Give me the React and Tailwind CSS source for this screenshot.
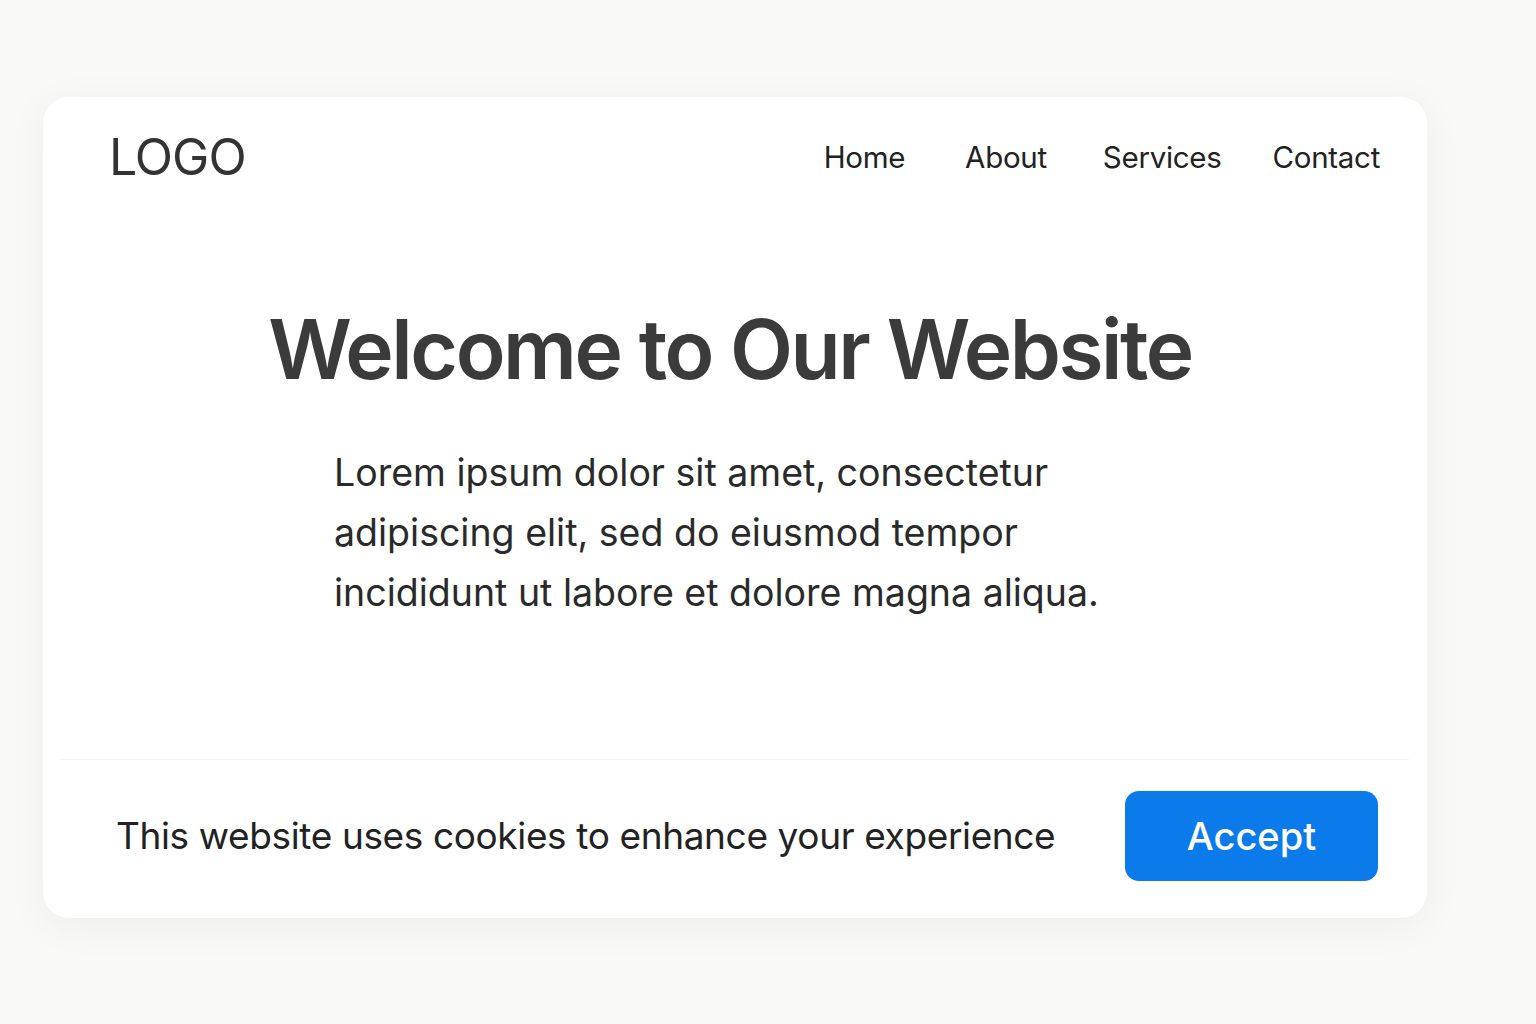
export default function App() {
  return (
    <div className="min-h-screen w-full bg-[#f9f9f7] pt-[97px] pl-[43px]" style={{ fontFamily: 'Inter, "Noto Sans", sans-serif' }}>
      <div className="w-[1384px] h-[821px] bg-white rounded-[26px] shadow-[0_8px_40px_rgba(0,0,0,0.05)] flex flex-col">
        {/* Header */}
        <header className="h-[120px] flex items-center justify-between pl-[66px] pr-[47px]">
          <div className="text-[50px] leading-none text-[#333] tracking-[-0.02em]">LOGO</div>
          <nav className="flex items-center text-[29.5px] text-[#222] tracking-[-0.01em]">
            <a className="mr-[60px]">Home</a>
            <a className="mr-[56px]">About</a>
            <a className="mr-[51px]">Services</a>
            <a>Contact</a>
          </nav>
        </header>

        {/* Hero */}
        <main className="flex-1 flex flex-col">
          <h1 className="mt-[92px] pr-[10px] text-center text-[82px] leading-none font-semibold text-[#3b3b3b] tracking-[-0.03em]">
            Welcome to Our Website
          </h1>
          <p className="mt-[52px] ml-[291px] w-[800px] text-[37.5px] leading-[60px] text-[#2a2a2a]">
            Lorem ipsum dolor sit amet, consectetur
            <br />
            adipiscing elit, sed do eiusmod tempor
            <br />
            incididunt ut labore et dolore magna aliqua.
          </p>
        </main>

        {/* Cookie banner */}
        <div className="mx-[18px] border-t border-[#f4f4f2]" />
        <div className="h-[158px] pb-[6px] flex items-center justify-between pl-[73px] pr-[49px]">
          <span className="text-[37px] text-[#222] tracking-[-0.01em]">
            This website uses cookies to enhance your experience
          </span>
          <button className="w-[253px] h-[90px] rounded-[14px] bg-[#0b7bec] text-white text-[38px] font-medium">
            Accept
          </button>
        </div>
      </div>
    </div>
  )
}
